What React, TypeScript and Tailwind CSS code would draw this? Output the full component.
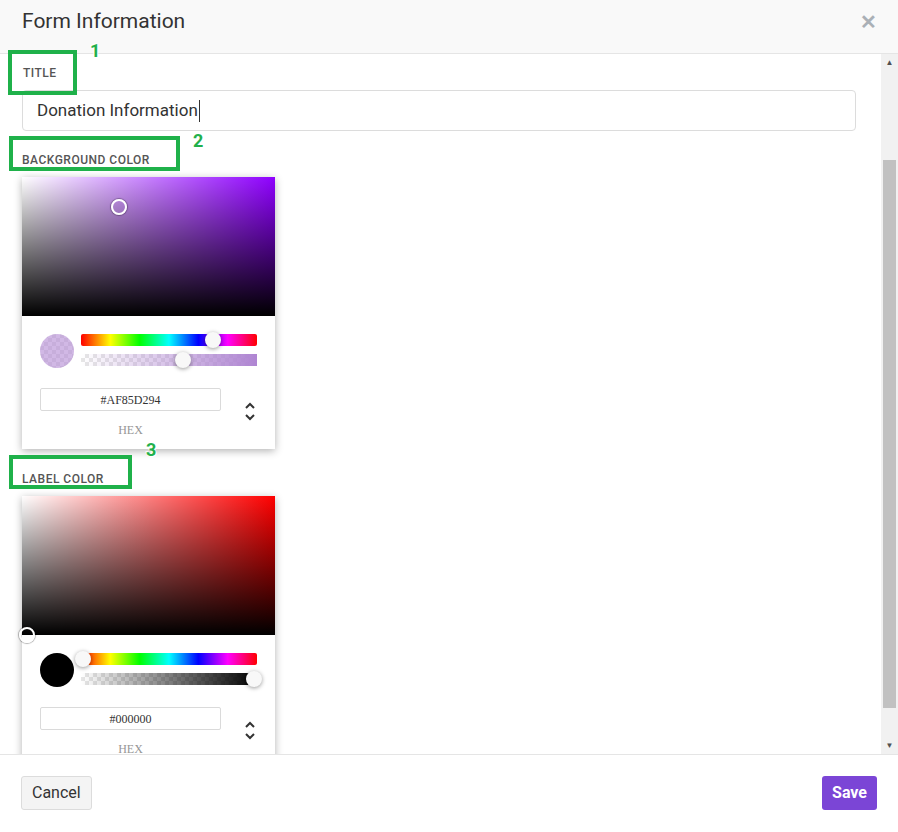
import React from "react";

const font = "font-[Roboto,sans-serif]";

function Checker({ className, children }: { className: string; children?: React.ReactNode }) {
  return (
    <div className={`relative bg-[conic-gradient(#e6e6e6_25%,#ffffff_0_50%,#e6e6e6_0_75%,#ffffff_0)] bg-[length:8px_8px] ${className}`}>
      {children}
    </div>
  );
}

function Arrows() {
  return (
    <svg width="12" height="22" viewBox="0 0 12 22" className="text-[#333]">
      <path d="M2 7 L6 3 L10 7" fill="none" stroke="currentColor" strokeWidth="2" />
      <path d="M2 14 L6 18 L10 14" fill="none" stroke="currentColor" strokeWidth="2" />
    </svg>
  );
}

function Picker({
  hueBg,
  pointer,
  swatch,
  hueThumb,
  alpha,
  alphaThumb,
  hex,
}: {
  hueBg: string;
  pointer: string;
  swatch: React.ReactNode;
  hueThumb: string;
  alpha: string;
  alphaThumb: string;
  hex: string;
}) {
  return (
    <div className="w-[253px] bg-white shadow-[0_2px_8px_rgba(0,0,0,0.3)]">
      <div className={`relative h-[139px] ${hueBg}`}>
        <div className="absolute inset-0 bg-[linear-gradient(to_right,#fff,rgba(255,255,255,0))]" />
        <div className="absolute inset-0 bg-[linear-gradient(to_top,#000,rgba(0,0,0,0))]" />
        <div className={`absolute w-[16px] h-[16px] rounded-full border-2 border-white shadow-[0_0_1px_1px_rgba(0,0,0,0.3)] ${pointer}`} />
      </div>
      <div className="px-[18px] pt-[18px] pb-[10px]">
        <div className="flex gap-[7px]">
          {swatch}
          <div className="flex-1 flex flex-col gap-[8px]">
            <div className="relative h-[12px] rounded-[2px] bg-[linear-gradient(to_right,#f00,#ff0,#0f0,#0ff,#00f,#f0f,#f00)]">
              <div className={`absolute top-[-2px] w-[16px] h-[16px] rounded-full bg-[#f8f8f8] shadow-[0_1px_4px_rgba(0,0,0,0.4)] ${hueThumb}`} />
            </div>
            <Checker className="h-[12px] rounded-[2px]">
              <div className={`absolute inset-0 ${alpha}`} />
              <div className={`absolute top-[-2px] w-[16px] h-[16px] rounded-full bg-[#f8f8f8] shadow-[0_1px_4px_rgba(0,0,0,0.4)] ${alphaThumb}`} />
            </Checker>
          </div>
        </div>
        <div className="flex mt-[20px]">
          <div className="w-[181px] flex flex-col items-center">
            <div className="w-full h-[23px] border border-[#dadada] rounded-[2px] flex items-center justify-center text-[12px] text-[#333] font-[Liberation_Serif,serif]">
              {hex}
            </div>
            <div className="mt-[10px] text-[12px] text-[#969696] font-[Liberation_Serif,serif]">HEX</div>
          </div>
          <div className="flex-1 flex justify-end pr-[1px] pt-[13px]">
            <Arrows />
          </div>
        </div>
      </div>
    </div>
  );
}

function Annot({ n, className }: { n: string; className: string }) {
  return (
    <span
      className={`absolute z-20 text-[18px] font-bold text-[#22b04b] leading-none [text-shadow:0_0_2px_#fff,1px_1px_0_#fff,-1px_-1px_0_#fff] ${className}`}
    >
      {n}
    </span>
  );
}

function Label({ text, box, num, numPos }: { text: string; box: string; num: string; numPos: string }) {
  return (
    <div className="relative">
      <div className="text-[12px] font-medium tracking-[0.5px] text-[#555] uppercase">{text}</div>
      <div className={`absolute z-20 border-[4px] border-[#1fb14a] ${box}`} />
      <Annot n={num} className={numPos} />
    </div>
  );
}

export default function App() {
  return (
    <div className={`w-[898px] h-[832px] bg-white flex flex-col overflow-hidden ${font}`}>
      <div className="h-[54px] shrink-0 bg-[#f9f9f9] border-b border-[#e5e5e5] flex items-center justify-between px-[22px]">
        <div className="text-[21px] text-[#333] font-normal -mt-[10px]">Form Information</div>
        <div className="text-[#aab0b6] text-[20px] font-bold -mt-[10px] -mr-[1px]">✕</div>
      </div>
      <div className="flex-1 flex min-h-0">
        <div className="flex-1 pl-[22px] pr-[25px] pt-[11px] relative">
          <div className="pl-[1px] h-[16px] flex items-center">
            <Label text="Title" box="left-[-15px] top-[-14px] w-[69px] h-[45px]" num="1" numPos="left-[67px] top-[-22px]" />
          </div>
          <div className="mt-[9px] h-[41px] border border-[#dcdcdc] rounded-[4px] flex items-center px-[14px] text-[17px] text-[#333]">
            Donation Information<span className="w-px h-[22px] bg-[#333] ml-[1px]" />
          </div>
          <div className="mt-[21px] h-[16px] flex items-center">
            <Label text="Background Color" box="left-[-13px] top-[-15px] w-[171px] h-[35px]" num="2" numPos="left-[171px] top-[-19px]" />
          </div>
          <div className="mt-[9px]">
            <Picker
              hueBg="bg-[#8f00ff]"
              pointer="left-[89px] top-[22px]"
              swatch={
                <Checker className="w-[34px] h-[34px] rounded-full overflow-hidden shrink-0">
                  <div className="absolute inset-0 bg-[rgba(175,133,210,0.58)]" />
                </Checker>
              }
              hueThumb="left-[124px]"
              alpha="bg-[linear-gradient(to_right,rgba(175,133,210,0),#af85d2)]"
              alphaThumb="left-[94px]"
              hex="#AF85D294"
            />
          </div>
          <div className="mt-[22px] h-[16px] flex items-center">
            <Label text="Label Color" box="left-[-13px] top-[-15px] w-[123px] h-[34px]" num="3" numPos="left-[124px] top-[-29px]" />
          </div>
          <div className="mt-[9px]">
            <Picker
              hueBg="bg-[#ff0000]"
              pointer="left-[-3px] top-[131px]"
              swatch={<div className="w-[34px] h-[34px] rounded-full bg-black shrink-0" />}
              hueThumb="left-[-6px]"
              alpha="bg-[linear-gradient(to_right,rgba(0,0,0,0),#000)]"
              alphaThumb="left-[165px]"
              hex="#000000"
            />
          </div>
        </div>
        <div className="w-[17px] shrink-0 bg-[#f1f1f1] flex flex-col relative z-10">
          <div className="h-[17px] flex items-center justify-center text-[#505050] text-[8px]">▲</div>
          <div className="h-[89px]" />
          <div className="flex-1 bg-[#c1c1c1] mx-[2px]" />
          <div className="h-[29px]" />
          <div className="h-[17px] flex items-center justify-center text-[#505050] text-[8px]">▼</div>
        </div>
      </div>
      <div className="h-[78px] shrink-0 relative z-10 bg-white border-t border-[#e5e5e5] flex items-center justify-between px-[21px] pb-[2px]">
        <button className="h-[34px] px-[10px] rounded-[3px] border border-[#dcdcdc] bg-[#f4f4f4] text-[16px] text-[#333]">
          Cancel
        </button>
        <button className="h-[34px] px-[10px] rounded-[3px] bg-[#7b45d6] text-[16px] font-bold text-white">Save</button>
      </div>
    </div>
  );
}
